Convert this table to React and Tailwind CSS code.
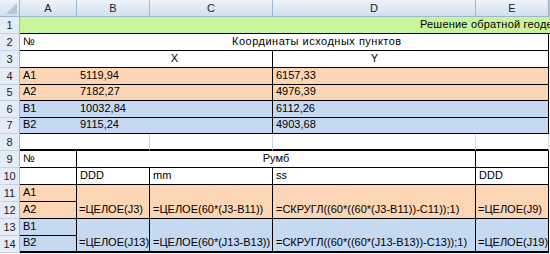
import React from "react";

// one spreadsheet cell; text sits on the bottom edge like Excel does
function Cell({ className = "", children }) {
  return (
    <div
      className={`flex items-end overflow-hidden whitespace-nowrap px-[3px] pb-[2px] text-[11px] leading-[13px] text-black ${className}`}
    >
      {children}
    </div>
  );
}

function RowNum({ n }) {
  return (
    <div className="flex items-center justify-center border-r border-b border-r-[#9eb6ce] border-b-[#c3d2e4] bg-[#e4ecf7] text-[11px] leading-[13px] text-[#222]">
      {n}
    </div>
  );
}

function ColHead({ label, className = "" }) {
  return (
    <div
      className={`flex items-center justify-center border-r border-b border-[#9eb6ce] bg-linear-to-b from-[#eef3fa] to-[#d3dfee] text-[11px] leading-[13px] text-[#222] ${className}`}
    >
      {label}
    </div>
  );
}

const orange = "bg-[#fcd5b4]";
const blue = "bg-[#c5d9f1]";

export default function App() {
  return (
    <div
      className="h-[254px] w-[550px] overflow-hidden bg-white"
      style={{ fontFamily: '"Liberation Sans", Arial, sans-serif' }}
    >
      <div className="grid grid-cols-[20px_57px_73px_123px_203px_73px_1fr] grid-rows-[17px_17px_17px_17px_17px_16px_17px_16px_17px_17px_17px_17px_17px_17px_17px]">
        {/* column headers */}
        <div className="relative border-r border-b border-[#9eb6ce] bg-linear-to-b from-[#eef3fa] to-[#d3dfee]">
          <svg className="absolute right-[2px] bottom-[2px]" width="11" height="11" viewBox="0 0 11 11">
            <polygon points="11,0 11,11 0,11" fill="#b4c6db" />
          </svg>
        </div>
        <ColHead label="A" />
        <ColHead label="B" />
        <ColHead label="C" />
        <ColHead label="D" />
        <ColHead label="E" />
        <ColHead label="" className="border-l border-l-[#f0b27a]" />

        {/* 1 */}
        <RowNum n="1" />
        <Cell className="col-span-6 border-b border-black bg-[#c8f59b] pl-[400px] tracking-[0.2px]">
          Решение обратной геодезической задачи
        </Cell>

        {/* 2 */}
        <RowNum n="2" />
        <Cell className="border-b border-black">№</Cell>
        <Cell className="col-span-4 border-r border-b border-black pl-[155px] tracking-[0.5px]">
          Координаты исходных пунктов
        </Cell>
        <Cell />

        {/* 3 */}
        <RowNum n="3" />
        <Cell className="border-b border-black" />
        <Cell className="col-span-2 justify-center border-r border-b border-black">X</Cell>
        <Cell className="justify-center border-b border-black">Y</Cell>
        <Cell className="border-r border-b border-black" />
        <Cell />

        {/* 4 - 7 */}
        {[
          ["4", "A1", "5119,94", "6157,33", orange],
          ["5", "A2", "7182,27", "4976,39", orange],
          ["6", "B1", "10032,84", "6112,26", blue],
          ["7", "B2", "9115,24", "4903,68", blue],
        ].map(([n, name, x, y, bg]) => (
          <React.Fragment key={n}>
            <RowNum n={n} />
            <Cell className={`border-b border-black ${bg}`}>{name}</Cell>
            <Cell className={`col-span-2 border-r border-b border-black ${bg}`}>{x}</Cell>
            <Cell className={`col-span-2 border-r border-b border-black ${bg}`}>{y}</Cell>
            <Cell />
          </React.Fragment>
        ))}

        {/* 8 */}
        <RowNum n="8" />
        <Cell className="col-span-2 border-r border-b-2 border-r-[#d0d7e5] border-b-black" />
        <Cell className="border-r border-b-2 border-r-[#d0d7e5] border-b-black" />
        <Cell className="border-r border-b-2 border-r-[#d0d7e5] border-b-black" />
        <Cell className="border-r border-b-2 border-r-[#d0d7e5] border-b-black" />
        <Cell />

        {/* 9 */}
        <RowNum n="9" />
        <Cell className="border-r border-b border-black">№</Cell>
        <Cell className="col-span-3 justify-center border-r border-b border-black">Румб</Cell>
        <Cell className="border-r border-b border-black" />
        <Cell />

        {/* 10 */}
        <RowNum n="10" />
        <Cell className="border-r border-b border-black" />
        <Cell className="border-r border-b border-black">DDD</Cell>
        <Cell className="border-r border-b border-black">mm</Cell>
        <Cell className="border-r border-b border-black">ss</Cell>
        <Cell className="border-r border-b border-black">DDD</Cell>
        <Cell />

        {/* 11 - 12 */}
        <RowNum n="11" />
        <Cell className={`border-r border-b border-black ${orange}`}>A1</Cell>
        <Cell className={`row-span-2 border-r border-b border-black pl-[2px] text-[10px] ${orange}`}>=ЦЕЛОЕ(J3)</Cell>
        <Cell className={`row-span-2 border-r border-b border-black ${orange}`}>=ЦЕЛОЕ(60*(J3-B11))</Cell>
        <Cell className={`row-span-2 border-r border-b border-black ${orange}`}>
          =СКРУГЛ((60*((60*(J3-B11))-C11));1)
        </Cell>
        <Cell className={`row-span-2 border-r border-b border-black pl-[2px] text-[10px] ${orange}`}>=ЦЕЛОЕ(J9)</Cell>
        <Cell className="row-span-2" />
        <RowNum n="12" />
        <Cell className={`border-r border-b border-black ${orange}`}>A2</Cell>

        {/* 13 - 14 */}
        <RowNum n="13" />
        <Cell className={`border-r border-b border-black ${blue}`}>B1</Cell>
        <Cell className={`row-span-2 border-r border-b-2 border-black pl-[2px] text-[10px] ${blue}`}>=ЦЕЛОЕ(J13)</Cell>
        <Cell className={`row-span-2 border-r border-b-2 border-black ${blue}`}>=ЦЕЛОЕ(60*(J13-B13))</Cell>
        <Cell className={`row-span-2 border-r border-b-2 border-black ${blue}`}>
          =СКРУГЛ((60*((60*(J13-B13))-C13));1)
        </Cell>
        <Cell className={`row-span-2 border-r border-b-2 border-black pl-[2px] text-[10px] ${blue}`}>=ЦЕЛОЕ(J19)</Cell>
        <Cell className="row-span-2" />
        <RowNum n="14" />
        <Cell className={`border-r border-b-2 border-black ${blue}`}>B2</Cell>
      </div>
    </div>
  );
}
